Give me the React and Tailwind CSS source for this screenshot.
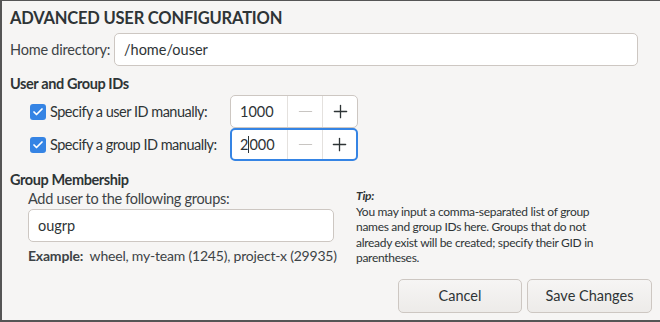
import { Check, Minus, Plus } from 'lucide-react';

const font = { fontFamily: 'Lato, "Noto Sans", sans-serif' };

function SpinRow({ label, value, focused }) {
  return (
    <div className="flex items-center h-[33px]">
      <div className="w-[220px] flex items-center pl-[20px] whitespace-nowrap">
        <span className="w-4 h-4 rounded-[3px] bg-[#3584e4] flex items-center justify-center shrink-0">
          <Check size={12} strokeWidth={3.5} color="white" />
        </span>
        <span className="ml-[4px] text-[14.5px] tracking-[-0.5px] text-[#2e3436]">{label}</span>
      </div>
      <div
        className={
          focused
            ? 'flex h-[33px] w-[128px] rounded-[5px] border-2 border-[#3584e4] bg-white'
            : 'flex h-[33px] w-[128px] rounded-[5px] border border-[#cdc7c2] bg-white'
        }
      >
        <div className={focused ? 'w-[55px] flex items-center pl-[8px] text-[14.5px] text-[#2e3436]' : 'w-[56px] flex items-center pl-[9px] text-[14.5px] text-[#2e3436]'}>
          {focused ? (
            <>
              2<span className="inline-block w-px h-[17px] bg-[#2e3436]" />000
            </>
          ) : (
            value
          )}
        </div>
        <div className="w-[35px] flex items-center justify-center border-l border-[#e4e1de]">
          <Minus size={21} strokeWidth={1.4} color="#c8c5c2" />
        </div>
        <div className="flex-1 flex items-center justify-center border-l border-[#e4e1de]">
          <Plus size={21} strokeWidth={1.5} color="#2e3436" />
        </div>
      </div>
    </div>
  );
}

export default function App() {
  return (
    <div
      className="w-[660px] h-[322px] box-border bg-[#f6f5f4] border-l-2 border-b-2 border-t border-[#555555] text-[#2e3436] overflow-hidden"
      style={font}
    >
      <div className="pl-[8px] pr-[22px] pt-[5px]">
        <h1 className="text-[16.5px] font-bold tracking-[-0.2px] leading-[24px] whitespace-nowrap">ADVANCED USER CONFIGURATION</h1>

        <div className="flex items-center mt-[3px]">
          <span className="w-[104px] text-[14.5px] tracking-[-0.2px] text-[#3d4346] whitespace-nowrap">Home directory:</span>
          <div className="flex-1 h-[33px] rounded-[5px] border border-[#cdc7c2] bg-white flex items-center pl-[9px] text-[14.5px]">
            /home/ouser
          </div>
        </div>

        <h2 className="mt-[8px] text-[14.5px] font-bold tracking-[-0.4px] leading-[20px]">User and Group IDs</h2>
        <div className="mt-[1px] flex flex-col">
          <SpinRow label="Specify a user ID manually:" value="1000" />
          <SpinRow label="Specify a group ID manually:" value="2000" focused />
        </div>

        <h2 className="mt-[9px] text-[14.5px] font-bold tracking-[-0.4px] leading-[20px]">Group Membership</h2>
        <div className="flex">
          <div className="w-[346px] pl-[18px]">
            <div className="text-[14.5px] tracking-[-0.3px] leading-[18px] text-[#3d4346] whitespace-nowrap">Add user to the following groups:</div>
            <div className="mt-[1px] w-[306px] h-[33px] rounded-[5px] border border-[#cdc7c2] bg-white flex items-center pl-[9px] text-[14.5px]">
              ougrp
            </div>
            <div className="mt-[5px] text-[14px] tracking-[-0.2px] leading-[18px] text-[#3d4346] whitespace-nowrap">
              <span className="font-bold">Example:</span>&nbsp; wheel, my-team (1245), project-x (29935)
            </div>
          </div>
          <div className="w-[268px] text-[12px] tracking-[-0.3px] leading-[15.5px] text-[#2e3436] -mt-[2px]">
            <div className="font-bold italic">Tip:</div>
            <div>
              You may input a comma-separated list of group names and group IDs here. Groups that do not
              already exist will be created; specify their GID in parentheses.
            </div>
          </div>
        </div>

        <div className="flex justify-end gap-[5px] mt-[13px] -mr-[14px]">
          <button className="w-[124px] h-[34px] rounded-[5px] border border-[#cdc7c2] bg-gradient-to-b from-[#f6f5f4] to-[#edebe9] text-[14.5px] text-[#2e3436]">
            Cancel
          </button>
          <button className="w-[125px] h-[34px] rounded-[5px] border border-[#cdc7c2] bg-gradient-to-b from-[#f6f5f4] to-[#edebe9] text-[14.5px] text-[#2e3436]">
            Save Changes
          </button>
        </div>
      </div>
    </div>
  );
}
